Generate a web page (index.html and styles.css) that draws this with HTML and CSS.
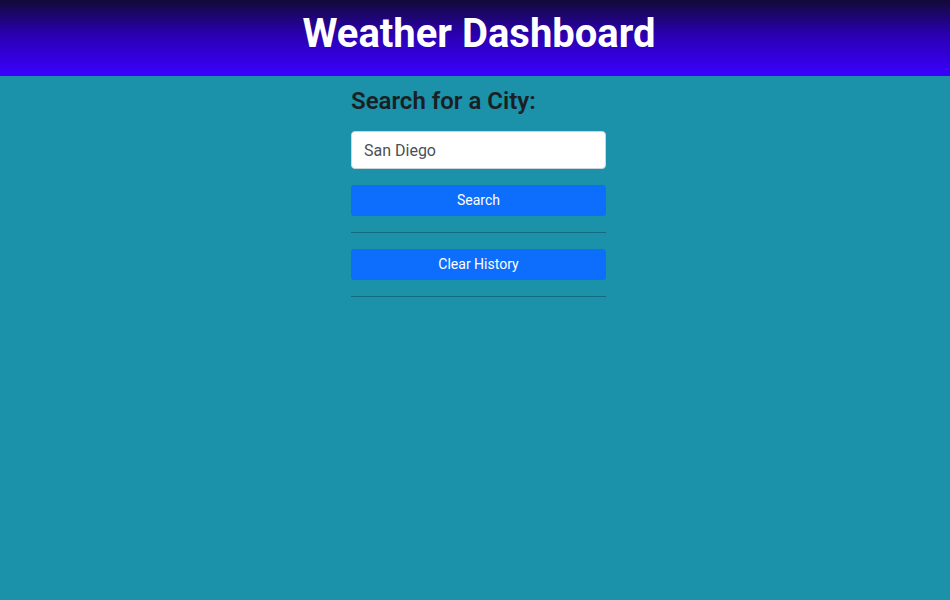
FILE: index.html
```html
<!DOCTYPE html>
<html>
<head>
<meta charset="utf-8">
<link rel="stylesheet" href="styles.css">
</head>
<body>
<header class="hero">
  <h1 class="hero-title">Weather Dashboard</h1>
</header>
<main class="main">
  <section class="search-col">
    <h2 class="search-title">Search for a City:</h2>
    <input class="city-input" type="text" value="San Diego">
    <button class="btn">Search</button>
    <hr class="divider">
    <button class="btn">Clear History</button>
    <hr class="divider">
  </section>
</main>
</body>
</html>
```
FILE: styles.css
```css
html, body {
  margin: 0;
  padding: 0;
}
body {
  background: #1b91aa;
  font-family: Roboto, "Liberation Sans", sans-serif;
  color: #212529;
  min-height: 600px;
}
.hero {
  height: 76px;
  background: linear-gradient(to bottom, #120a38 0%, #2a00b0 45%, #3a00ff 100%);
  display: flex;
  justify-content: center;
  align-items: flex-start;
  padding-left: 8px;
}
.hero-title {
  margin: 10px 0 0;
  color: #fff;
  font-size: 40px;
  font-weight: 700;
  line-height: 48px;
}
.main {
  display: flex;
  justify-content: center;
}
.search-col {
  width: 255px;
  margin-left: 7px;
  display: flex;
  flex-direction: column;
  padding-top: 11px;
}
.search-title {
  margin: 0 0 16px;
  font-size: 24px;
  font-weight: 600;
  line-height: 28px;
  color: #1a1f23;
}
.city-input {
  box-sizing: border-box;
  height: 38px;
  width: 100%;
  margin: 0 0 16px;
  padding: 6px 12px;
  font-family: Roboto, "Liberation Sans", sans-serif;
  font-size: 16px;
  color: #495057;
  background: #fff;
  border: 1px solid #ced4da;
  border-radius: 4px;
  outline: none;
}
.btn {
  box-sizing: border-box;
  height: 31px;
  width: 100%;
  background: #0d6efd;
  color: #fff;
  border: none;
  border-radius: 3px;
  font-family: Roboto, "Liberation Sans", sans-serif;
  font-size: 14px;
  font-weight: 400;
  padding: 0 0 1px;
}
.divider {
  margin: 16px 0;
  border: none;
  border-top: 1px solid rgba(0,0,0,0.25);
  height: 0;
}
```
